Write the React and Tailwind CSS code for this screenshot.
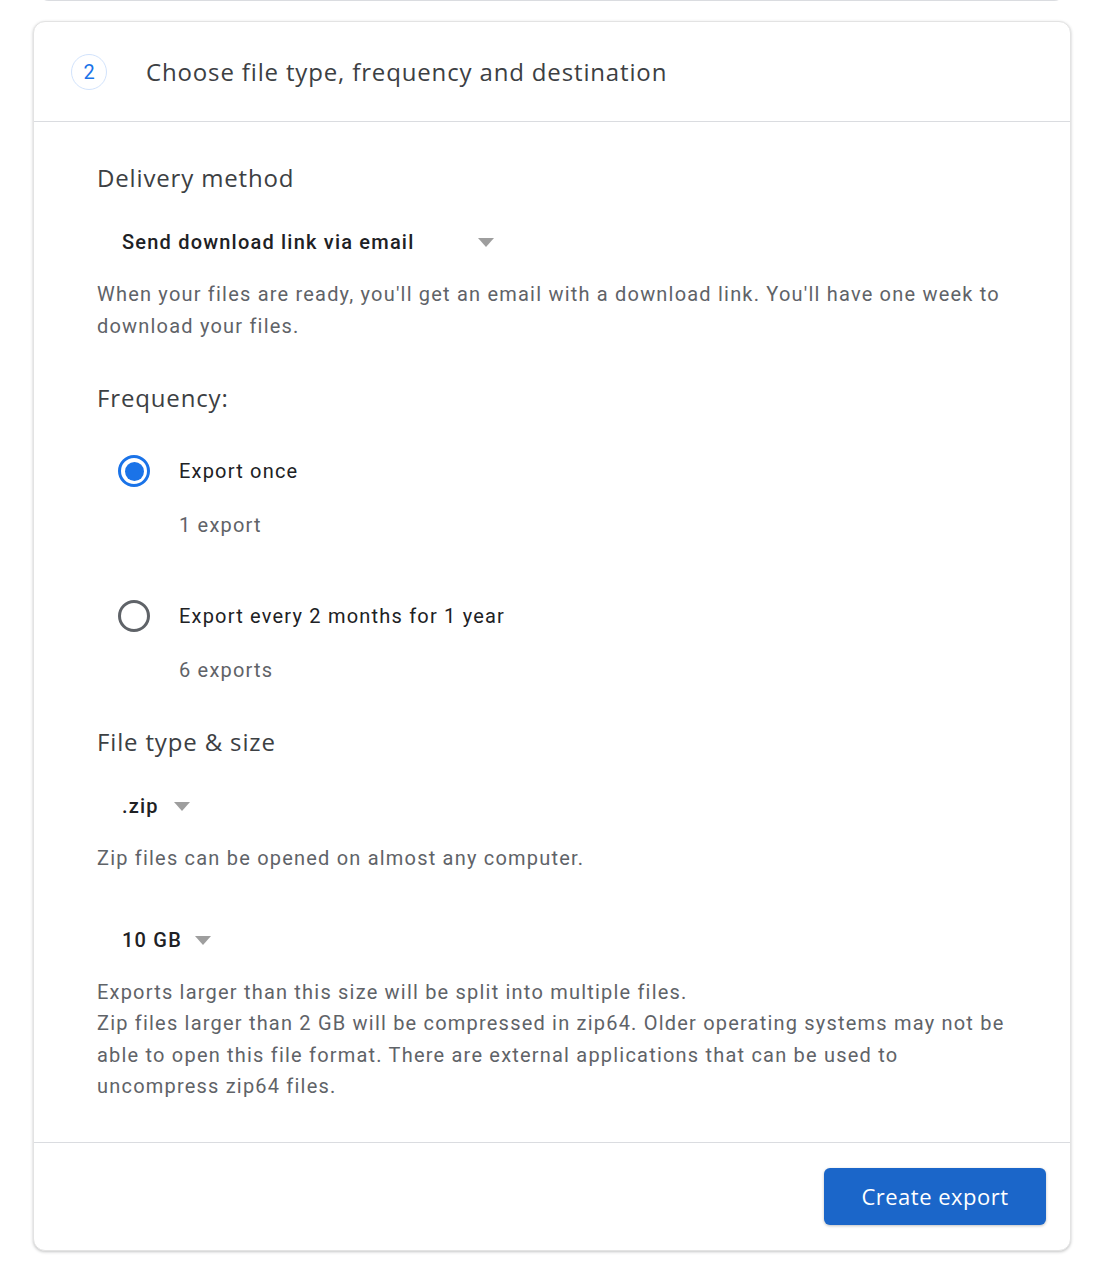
import React from "react";

function Arrow() {
  return (
    <svg width="16" height="9" viewBox="0 0 16 9" className="shrink-0">
      <path d="M0 0 L16 0 L8 9 Z" fill="#9e9e9e" />
    </svg>
  );
}

function Radio({ checked }) {
  return checked ? (
    <span className="ml-[21px] flex h-[32px] w-[32px] shrink-0 items-center justify-center rounded-full border-[3px] border-[#1a73e8]">
      <span className="h-[19px] w-[19px] rounded-full bg-[#1a73e8]" />
    </span>
  ) : (
    <span className="ml-[21px] h-[32px] w-[32px] shrink-0 rounded-full border-[3px] border-[#5f6368]" />
  );
}

export default function App() {
  const body = "font-['Roboto',sans-serif]";
  const head = "font-['Open_Sans',sans-serif] tracking-[0.85px]";
  const txt = "text-[20px] tracking-[1.2px]";
  return (
    <div className={`min-h-[1270px] bg-white ${body}`}>
      <div className="ml-[37px] -mt-[11px] h-[12px] w-[1029px] rounded-b-[12px] border border-t-0 border-[#dadce0]" />
      <div className="ml-[33px] mt-[20px] w-[1038px] overflow-hidden rounded-[12px] border border-[#e3e3e3] bg-white shadow-[0_1px_3px_rgba(60,64,67,0.3)]">
        <div className="flex h-[100px] items-center border-b border-[#dadce0] pl-[37px]">
          <span className="flex h-[36px] w-[36px] items-center justify-center rounded-full border border-[#d2e3fc] text-[20px] text-[#1a73e8]">
            2
          </span>
          <span className={`ml-[39px] text-[24px] text-[#3c4043] ${head}`}>
            Choose file type, frequency and destination
          </span>
        </div>

        <div className="pl-[63px] pr-[56px] pt-[40px] pb-[40px]">
          <div className={`text-[24px] leading-[32px] text-[#3c4043] ${head}`}>Delivery method</div>
          <div className="mt-[24px] flex h-[48px] items-center pl-[25px]">
            <span className={`w-[356px] font-medium text-[#202124] ${txt}`}>Send download link via email</span>
            <Arrow />
          </div>
          <p className={`mt-[12px] leading-[32px] text-[#5f6368] ${txt}`}>
            When your files are ready, you'll get an email with a download link. You'll have one week to download your files.
          </p>

          <div className={`mt-[40px] text-[24px] leading-[32px] text-[#3c4043] ${head}`}>Frequency:</div>
          <div className="mt-[33px] flex h-[48px] items-center">
            <Radio checked />
            <span className={`ml-[29px] text-[#202124] ${txt}`}>Export once</span>
          </div>
          <div className={`mt-[14px] pl-[82px] leading-[32px] text-[#5f6368] ${txt}`}>1 export</div>
          <div className="mt-[51px] flex h-[48px] items-center">
            <Radio />
            <span className={`ml-[29px] text-[#202124] ${txt}`}>Export every 2 months for 1 year</span>
          </div>
          <div className={`mt-[14px] pl-[82px] leading-[32px] text-[#5f6368] ${txt}`}>6 exports</div>

          <div className={`mt-[40px] text-[24px] leading-[32px] text-[#3c4043] ${head}`}>File type &amp; size</div>
          <div className="mt-[24px] flex h-[48px] items-center gap-[15px] pl-[25px]">
            <span className={`font-medium text-[#202124] ${txt}`}>.zip</span>
            <Arrow />
          </div>
          <p className={`mt-[12px] leading-[32px] text-[#5f6368] ${txt}`}>Zip files can be opened on almost any computer.</p>
          <div className="mt-[42px] flex h-[48px] items-center gap-[13px] pl-[25px]">
            <span className={`font-medium text-[#202124] ${txt}`}>10 GB</span>
            <Arrow />
          </div>
          <p className={`mt-[13px] leading-[31.3px] text-[#5f6368] ${txt}`}>
            Exports larger than this size will be split into multiple files.
            <br />
            Zip files larger than 2 GB will be compressed in zip64. Older operating systems may not be able to open this file format. There are external applications that can be used to uncompress zip64 files.
          </p>
        </div>

        <div className="flex justify-end border-t border-[#dadce0] px-[24px] py-[25px]">
          <button className="flex h-[57px] w-[222px] items-center justify-center rounded-[6px] bg-[#1b66c9] font-['Open_Sans',sans-serif] text-[22px] tracking-[0.5px] text-white shadow-[0_1px_3px_rgba(0,0,0,0.25)]">
            Create export
          </button>
        </div>
      </div>
    </div>
  );
}
